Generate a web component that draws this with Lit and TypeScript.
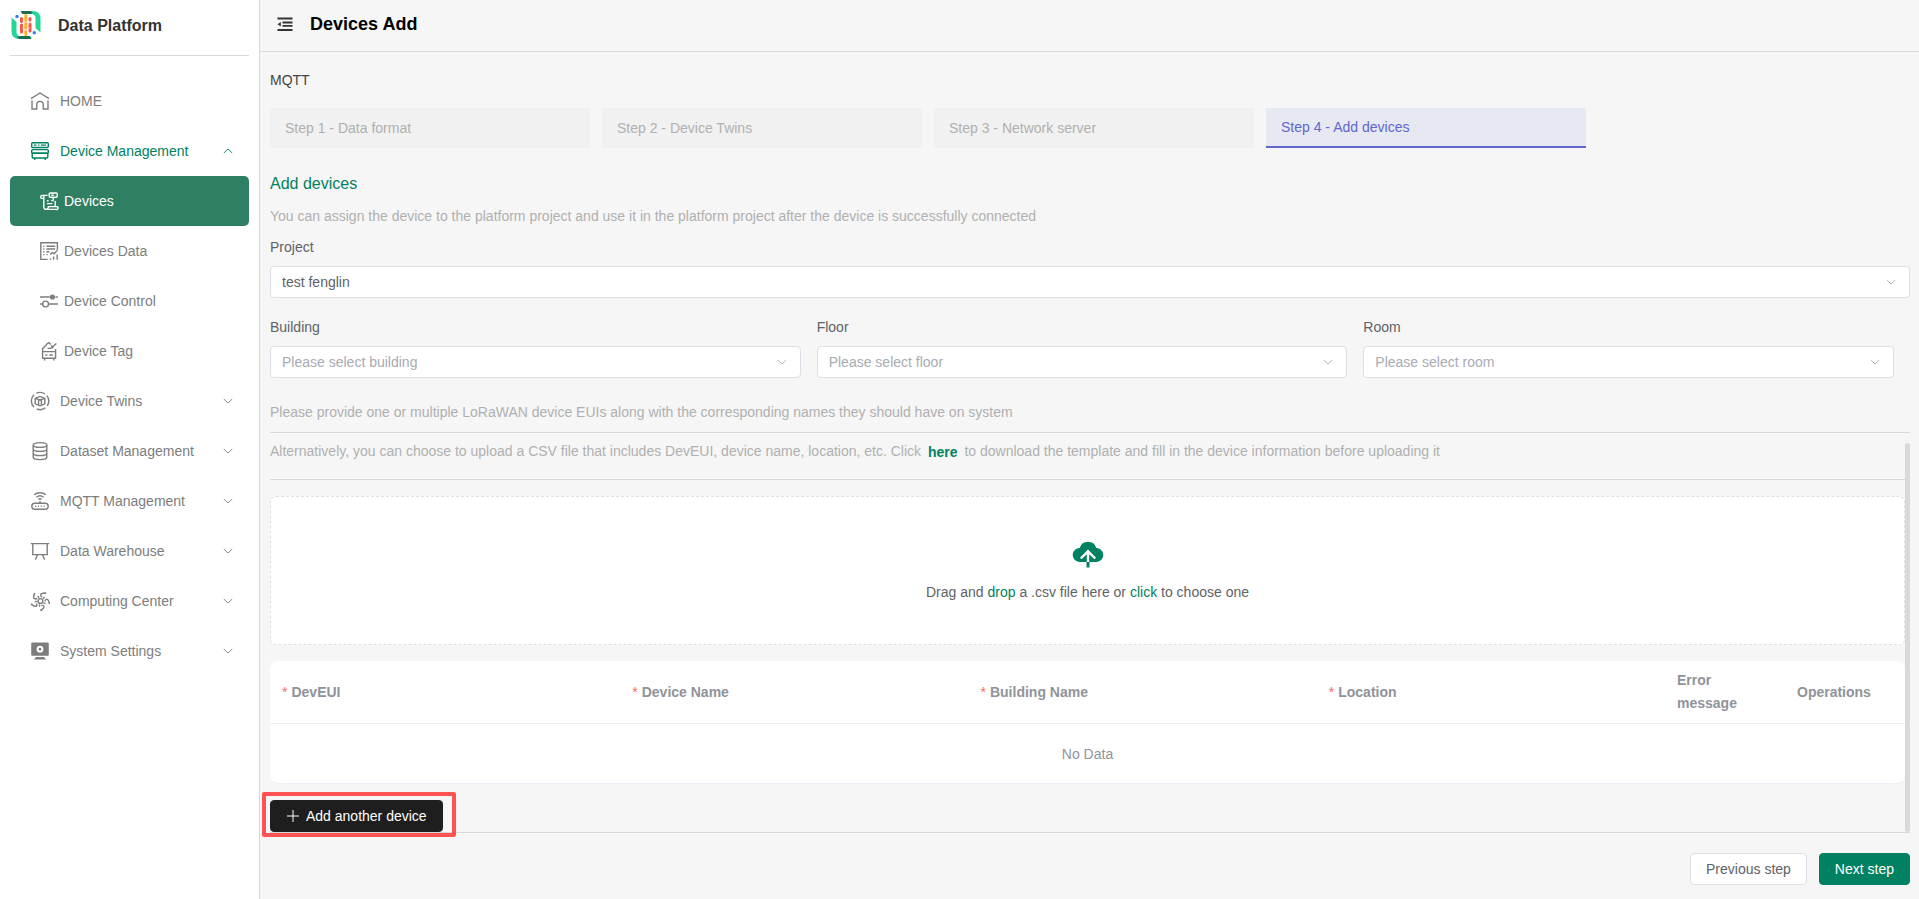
import { LitElement, html, svg, css, nothing, TemplateResult } from "lit";
import { customElement, property } from "lit/decorators.js";
import { classMap } from "lit/directives/class-map.js";

const icons: Record<string, TemplateResult> = {
  home: svg`<path d="M1 7.6 10 2l9 5.6M2 9.6V18h4.8v-4.4a3.2 3.2 0 0 1 6.4 0V18H18V9.6" />`,
  server: svg`<rect x="1.7" y="1.7" width="16.6" height="4.8" rx="1"/><rect x="1.7" y="8.6" width="16.6" height="3.6" rx="1"/><rect x="2.2" y="12.2" width="15.6" height="4.8" rx="1"/><path d="M4 4.100h2.400M8 4.100h1.400M11 4.100h5M4.800 17v2M15.200 17v2"/>`,
  devices: svg`<path d="M8.6 4.400H3.200a1.500 1.500 0 0 0 0 3h1.600V16a2.200 2.200 0 0 0 2.200 2.400h9.800a1.500 1.500 0 0 0 1.500-2.800H9.400a2.200 2.200 0 0 1-2.400 2.600M4.800 7.400V4.400M16.200 15.200V10M8 12.600h5.400M8 9.800h1.600"/><rect x="10.200" y="2" width="8" height="4.200" rx="1"/><path d="M12 4.100h3M14.200 6.200v3.400h-2"/>`,
  data: svg`<path d="M8.600 18.400H1.800V1.800h16.600v7.600M7.400 5.200h8.800M7.400 8h8.800M7.400 10.800h3M4.200 5.200h1.200M4.200 8h1.200M4.200 10.800h1.200M4.200 13.600h1.200M7.400 13.600h1.200M11 13.400l2.200-2 1.800 1.400 3-3M11.400 18.800v-1.600M14.600 18.800v-3.200M18.200 18.800v-5.400"/>`,
  control: svg`<path d="M1 6h9.600M16.400 6h2.400M1 13h2.600M9.600 13H19"/><circle cx="6.600" cy="13" r="2.900"/><circle cx="13.400" cy="6" r="1.900" fill="currentColor"/>`,
  tag: svg`<path d="M3.600 17V7.600l4.200-4.200M16.600 17V8M3 17.200h14.200M3.600 10.600h13M6.400 14h2M10.400 14h3.400M5.600 17.400v2M14.800 17.400v2M7.400 3.600l2.200-2 2.200 1.800M8.600 7.400h3.200l5.600-5M12.400 4.400l1.600 3"/>`,
  twins: svg`<path d="M4 3.800a8.600 8.600 0 0 0 0 12.400M6.400 2.200a8.600 8.600 0 0 1 8.400.7M16.800 4.600a8.600 8.600 0 0 1 .4 10.200M15.400 16.800a8.600 8.600 0 0 1-8.600 1.200"/><path d="M5.200 7.400 10 5.400l4.800 2v5.400L10 14.800l-4.800-2zM5.200 7.400 10 9l4.800-1.600M8.600 9v5M11.400 9v5"/>`,
  dataset: svg`<ellipse cx="10" cy="4" rx="6.800" ry="2.400"/><path d="M3.200 4v12c0 1.400 3 2.600 6.800 2.600s6.800-1.200 6.800-2.600V4M3.200 8c0 1.400 3 2.400 6.800 2.400s6.800-1 6.800-2.400M3.200 12.200c0 1.400 3 2.400 6.800 2.400s6.800-1 6.800-2.400"/>`,
  mqtt: svg`<path d="M4.200 3.800c3.400-2.800 8.200-2.800 11.600 0M6.400 6.200c2.200-1.800 5-1.800 7.200 0M8.400 8.400c1-.8 2.200-.8 3.200 0M10 10v2"/><rect x="1.800" y="12.200" width="16.400" height="6" rx="3"/><path d="M5.200 15.200h1M8 15.200h1M10.800 15.200h1M13.600 15.200h1"/>`,
  warehouse: svg`<path d="M.8 2.600h18.400M2.800 2.600v11h14.400v-11M7.400 14l-2 4.600M12.600 14l2 4.600"/>`,
  computing: svg`<circle cx="10.400" cy="10" r="2.400"/>${[0, 72, 144, 216, 288].map(
    (turn) => svg`<g transform="rotate(${turn} 10.4 10)"><path d="M12.200 5.800c-2-.8-2.200-3 .4-3.600h2.200"/><path d="M14.400 1.200h1.800V3h-1.800z" fill="currentColor" stroke="none"/><path d="M9 6.800 7.800 4.800"/></g>`
  )}`,
  settings: svg`<path d="M1.200 2.800q0-1.200 1.200-1.200h15.200q1.200 0 1.200 1.200v10.800q0 1.200-1.200 1.200H2.400q-1.200 0-1.200-1.200zM6 16h8l2 2.600H4z" fill="currentColor" stroke="none"/><circle cx="10" cy="8.200" r="2.400" stroke="#fff" stroke-width="2"/>`,
};

interface MenuItem {
  label: string;
  icon: string;
  children?: MenuItem[];
  open?: boolean;
  active?: boolean;
  leaf?: boolean;
}

const menu: MenuItem[] = [
  { label: "HOME", icon: "home", leaf: true },
  {
    label: "Device Management",
    icon: "server",
    open: true,
    children: [
      { label: "Devices", icon: "devices", active: true },
      { label: "Devices Data", icon: "data" },
      { label: "Device Control", icon: "control" },
      { label: "Device Tag", icon: "tag" },
    ],
  },
  { label: "Device Twins", icon: "twins" },
  { label: "Dataset Management", icon: "dataset" },
  { label: "MQTT Management", icon: "mqtt" },
  { label: "Data Warehouse", icon: "warehouse" },
  { label: "Computing Center", icon: "computing" },
  { label: "System Settings", icon: "settings" },
];

const chevron = (up = false) => html`<svg class="chevron" viewBox="0 0 12 12" aria-hidden="true">
  <path d=${up ? "M1.800 8 6 4l4.200 4" : "M1.800 4 6 8l4.200-4"} />
</svg>`;

const base = css`
  * {
    box-sizing: border-box;
  }
  :host {
    font-family: "Liberation Sans", Arial, sans-serif;
    font-size: 14px;
    line-height: 20px;
  }
  button,
  select {
    font: inherit;
    cursor: pointer;
  }
  svg {
    display: block;
    flex: none;
  }
  .chevron {
    width: 12px;
    height: 12px;
    fill: none;
    stroke: currentColor;
    stroke-width: 0.9;
  }
`;

@customElement("side-menu")
export class SideMenu extends LitElement {
  static styles = [
    base,
    css`
      :host {
        display: block;
        padding: 0 10px;
        background: #fff;
        border-right: 1px solid #d9d9d9;
      }
      .brand {
        display: flex;
        align-items: center;
        gap: 16px;
        height: 56px;
        padding: 0 0 4px 1px;
        border-bottom: 1px solid #d9d9d9;
        font-size: 16px;
        font-weight: bold;
        color: #333;
      }
      .logo {
        width: 31px;
        height: 31px;
      }
      .list {
        margin: 20px 0 0;
        padding: 0;
        list-style: none;
      }
      .sub {
        margin: 0;
        padding: 0;
        list-style: none;
      }
      .item {
        display: flex;
        align-items: center;
        gap: 10px;
        width: 100%;
        height: 50px;
        padding: 0 15px 0 20px;
        border: 0;
        border-radius: 5px;
        background: none;
        color: #7d7d7d;
        text-align: left;
        text-decoration: none;
      }
      .sub .item {
        gap: 5px;
        padding-left: 29px;
      }
      .label {
        flex: 1;
      }
      .open {
        color: #008161;
      }
      .sub .active {
        background: #2f8062;
        color: #fff;
      }
      .icon {
        width: 20px;
        height: 20px;
        fill: none;
        stroke: currentColor;
        stroke-width: 1.4;
      }
    `,
  ];

  private icon(name: string) {
    return html`<svg class="icon" viewBox="0 0 20 20" aria-hidden="true">${icons[name]}</svg>`;
  }

  private link(item: MenuItem) {
    return html`<a class=${classMap({ item: true, active: !!item.active })} href="#">
      ${this.icon(item.icon)}<span class="label">${item.label}</span>
    </a>`;
  }

  render() {
    return html`
      <div class="brand">
        <svg class="logo" viewBox="0 0 31 31" aria-hidden="true">
          <path d="M.500 7.500l5 4.500v10q0 3 3 4h10l2 1-1 2H8.500q-8 0-8-8z" fill="#25d695" />
          <path d="M29.500 22.500l-5-4.500V8q0-3-3-4h-10l-1-1 1-2h10q8 0 8 8z" fill="#25d695" />
          <path d="M9.500 1h10l2 2-2 1h-8zM20.500 29h-12l-3-2 5-1h8z" fill="#1d6b50" />
          <path d="M10.500 8.500v3M10.500 15v7M19 8.500v1.500M19 14v7" stroke="#f5544f" stroke-width="3" stroke-linecap="round" />
          <path d="M11.500 13h7M11.500 18h7" stroke="#ffd3c4" stroke-width="1.500" />
          <path d="M14.800 5.500v5M14.800 14v4M14.800 21.500v3" stroke="#ffb12e" stroke-width="3" stroke-linecap="round" />
          <circle cx="6" cy="6.500" r="1.700" fill="#2f7df6" />
          <circle cx="23.300" cy="22.700" r="1.700" fill="#2f7df6" />
        </svg>
        <span>Data Platform</span>
      </div>
      <nav>
        <ul class="list">
          ${menu.map(
            (item) => html`<li>
              ${item.leaf
                ? this.link(item)
                : html`<button
                    class=${classMap({ item: true, open: !!item.open })}
                    aria-expanded=${item.open ? "true" : "false"}
                  >
                    ${this.icon(item.icon)}<span class="label">${item.label}</span>${chevron(item.open)}
                  </button>`}
              ${item.children
                ? html`<ul class="sub">
                    ${item.children.map((child) => html`<li>${this.link(child)}</li>`)}
                  </ul>`
                : nothing}
            </li>`
          )}
        </ul>
      </nav>
    `;
  }
}

@customElement("select-field")
export class SelectField extends LitElement {
  @property() label = "";
  @property() value = "";
  @property() placeholder = "";

  static styles = [
    base,
    css`
      :host {
        display: block;
      }
      label {
        display: block;
        margin-bottom: 8px;
        line-height: 22px;
        color: #606266;
      }
      .box {
        display: grid;
        align-items: center;
      }
      select,
      .chevron {
        grid-area: 1 / 1;
      }
      select {
        appearance: none;
        width: 100%;
        height: 32px;
        padding: 0 36px 0 11px;
        border: 1px solid #dcdfe6;
        border-radius: 4px;
        background: #fff;
        color: #606266;
      }
      .empty {
        color: #a8abb2;
      }
      .chevron {
        justify-self: end;
        margin-right: 13px;
        color: #a8abb2;
        pointer-events: none;
      }
    `,
  ];

  render() {
    return html`
      <label for="field">${this.label}</label>
      <div class="box">
        <select id="field" class=${classMap({ empty: !this.value })}>
          <option>${this.value || this.placeholder}</option>
        </select>
        ${chevron()}
      </div>
    `;
  }
}

@customElement("app-root")
export class AppRoot extends LitElement {
  static styles = [
    base,
    css`
      :host {
        display: grid;
        grid-template-columns: 260px minmax(0, 1fr);
        min-height: 100vh;
        background: #f6f6f6;
        color: #606266;
      }
      .header {
        display: flex;
        align-items: center;
        gap: 16px;
        height: 52px;
        padding: 0 16px 4px;
        border-bottom: 1px solid #d9d9d9;
      }
      .fold {
        padding: 0;
        border: 0;
        background: none;
        color: #333;
      }
      .fold svg {
        width: 18px;
        height: 18px;
      }
      h1 {
        margin: 0;
        font-size: 18px;
        line-height: 24px;
        color: #000;
      }
      .page {
        padding: 18px 9px 14px 10px;
      }
      .kind {
        color: #444;
      }
      .steps {
        display: grid;
        grid-template-columns: repeat(4, minmax(0, 320px));
        gap: 12px;
        margin: 18px 0 22px;
        padding: 0;
        list-style: none;
      }
      .step {
        display: block;
        width: 100%;
        height: 40px;
        padding: 0 15px;
        border: 0;
        background: #f1f1f1;
        color: #b0b0b0;
        text-align: left;
      }
      .current {
        border-bottom: 2px solid #6165d0;
        background: #e6e9f2;
        color: #6165d0;
      }
      h2 {
        margin: 0;
        font-size: 16px;
        font-weight: normal;
        line-height: 28px;
        color: #008161;
      }
      .hint {
        margin: 0;
        color: #b0b0b0;
      }
      .intro {
        margin: 8px 0 10px;
      }
      .places {
        display: grid;
        grid-template-columns: repeat(3, 1fr);
        gap: 16px;
        margin: 18px 0 24px;
        padding-right: 16px;
      }
      .scroller {
        display: flex;
        margin-top: 10px;
        border: solid #d9d9d9;
        border-width: 1px 0;
      }
      .content {
        flex: 1;
        min-width: 0;
      }
      .thumb {
        width: 5px;
        margin-top: 10px;
        border-radius: 3px;
        background: #d9d9d9;
      }
      .template {
        padding: 8px 0 18px;
        border-bottom: 1px solid #d9d9d9;
      }
      .here {
        display: inline-block;
        margin: 0 3px;
        font-weight: bold;
        line-height: 16px;
        vertical-align: middle;
        color: #008161;
        text-decoration: none;
      }
      .drop {
        display: flex;
        flex-direction: column;
        align-items: center;
        gap: 13px;
        margin: 16px 0;
        padding: 43px 16px 42px;
        border: 1px dashed #dcdfe6;
        border-radius: 6px;
        background: #fff;
        cursor: pointer;
      }
      .drop input {
        display: none;
      }
      .drop svg {
        width: 32px;
        height: 29px;
      }
      .drop em {
        font-style: normal;
        color: #008161;
      }
      table {
        width: 100%;
        table-layout: fixed;
        border-spacing: 0;
        border-radius: 8px;
        background: #fff;
        line-height: 23px;
        color: #909399;
      }
      .wide {
        width: 21.3%;
      }
      .narrow {
        width: 120px;
      }
      th {
        padding: 8px 12px;
        border-bottom: 1px solid #ebeef5;
        text-align: left;
      }
      td {
        height: 60px;
        padding: 2px 0 0;
        border-bottom: 1px solid #ebeef5;
        border-radius: 0 0 8px 8px;
        text-align: center;
      }
      .star {
        margin-right: 4px;
        font-weight: normal;
        color: #f56c6c;
      }
      .marked {
        position: relative;
        width: fit-content;
        margin-top: 16px;
      }
      .marker {
        position: absolute;
        inset: -8px -13px -5px -8px;
        border: 4px solid #ff5252;
        border-radius: 2px;
        pointer-events: none;
      }
      .btn {
        display: flex;
        align-items: center;
        gap: 6px;
        height: 32px;
        padding: 0 15px;
        border: 1px solid #dcdfe6;
        border-radius: 4px;
        background: #fff;
        color: #606266;
      }
      .dark {
        border-color: #1e1e1e;
        background: #1e1e1e;
        color: #fff;
      }
      .dark svg {
        width: 14px;
        height: 14px;
      }
      .primary {
        border-color: #008161;
        background: #008161;
        color: #fff;
      }
      .footer {
        display: flex;
        justify-content: flex-end;
        gap: 12px;
        margin-top: 20px;
      }
    `,
  ];

  private steps = ["Step 1 - Data format", "Step 2 - Device Twins", "Step 3 - Network server", "Step 4 - Add devices"];
  private required = ["DevEUI", "Device Name", "Building Name", "Location"];

  render() {
    return html`
      <side-menu></side-menu>
      <main>
        <header class="header">
          <button class="fold" aria-label="Collapse menu">
            <svg viewBox="0 0 18 18">
              <path d="M1.500 3.500h15M6.500 7.500h10M6.500 10.800h10M1.500 15h15" stroke="currentColor" stroke-width="1.800" />
              <path d="M1.500 9.200 4.800 7v4.400z" fill="currentColor" />
            </svg>
          </button>
          <h1>Devices Add</h1>
        </header>
        <div class="page">
          <div class="kind">MQTT</div>
          <ol class="steps">
            ${this.steps.map(
              (name, i) => html`<li><button class=${classMap({ step: true, current: i === 3 })}>${name}</button></li>`
            )}
          </ol>
          <h2>Add devices</h2>
          <p class="hint intro">
            You can assign the device to the platform project and use it in the platform project after the device is
            successfully connected
          </p>
          <select-field label="Project" value="test fenglin"></select-field>
          <div class="places">
            <select-field label="Building" placeholder="Please select building"></select-field>
            <select-field label="Floor" placeholder="Please select floor"></select-field>
            <select-field label="Room" placeholder="Please select room"></select-field>
          </div>
          <p class="hint">
            Please provide one or multiple LoRaWAN device EUIs along with the corresponding names they should have on
            system
          </p>
          <section class="scroller">
            <div class="content">
              <p class="hint template">
                Alternatively, you can choose to upload a CSV file that includes DevEUI, device name, location, etc.
                Click <a class="here" href="#">here</a> to download the template and fill in the device information
                before uploading it
              </p>
              <label class="drop">
                <input type="file" accept=".csv" />
                <svg viewBox="0 0 32 29" aria-hidden="true">
                  <path d="M7.500 22A7 7 0 0 1 7.800 8 8.500 8.500 0 0 1 24.200 8 7 7 0 0 1 24.500 22zM14.500 22h3v5.500h-3z" fill="#008161" />
                  <path d="M16 22V11.500M8.800 18.500l7.200-7.200 7.200 7.200" fill="none" stroke="#fff" stroke-width="2.400" />
                </svg>
                <span>Drag and <em>drop</em> a .csv file here or <em>click</em> to choose one</span>
              </label>
              <table>
                <colgroup>
                  <col />
                  <col class="wide" />
                  <col class="wide" />
                  <col class="wide" />
                  <col class="narrow" />
                  <col class="narrow" />
                </colgroup>
                <thead>
                  <tr>
                    ${this.required.map((name) => html`<th scope="col"><span class="star">*</span>${name}</th>`)}
                    <th scope="col">Error message</th>
                    <th scope="col">Operations</th>
                  </tr>
                </thead>
                <tbody>
                  <tr>
                    <td colspan="6">No Data</td>
                  </tr>
                </tbody>
              </table>
              <div class="marked">
                <button class="btn dark">
                  <svg viewBox="0 0 14 14" aria-hidden="true"><path d="M7 1v12M1 7h12" stroke="currentColor" /></svg>
                  Add another device
                </button>
                <div class="marker"></div>
              </div>
            </div>
            <div class="thumb"></div>
          </section>
          <div class="footer">
            <button class="btn">Previous step</button>
            <button class="btn primary">Next step</button>
          </div>
        </div>
      </main>
    `;
  }
}
